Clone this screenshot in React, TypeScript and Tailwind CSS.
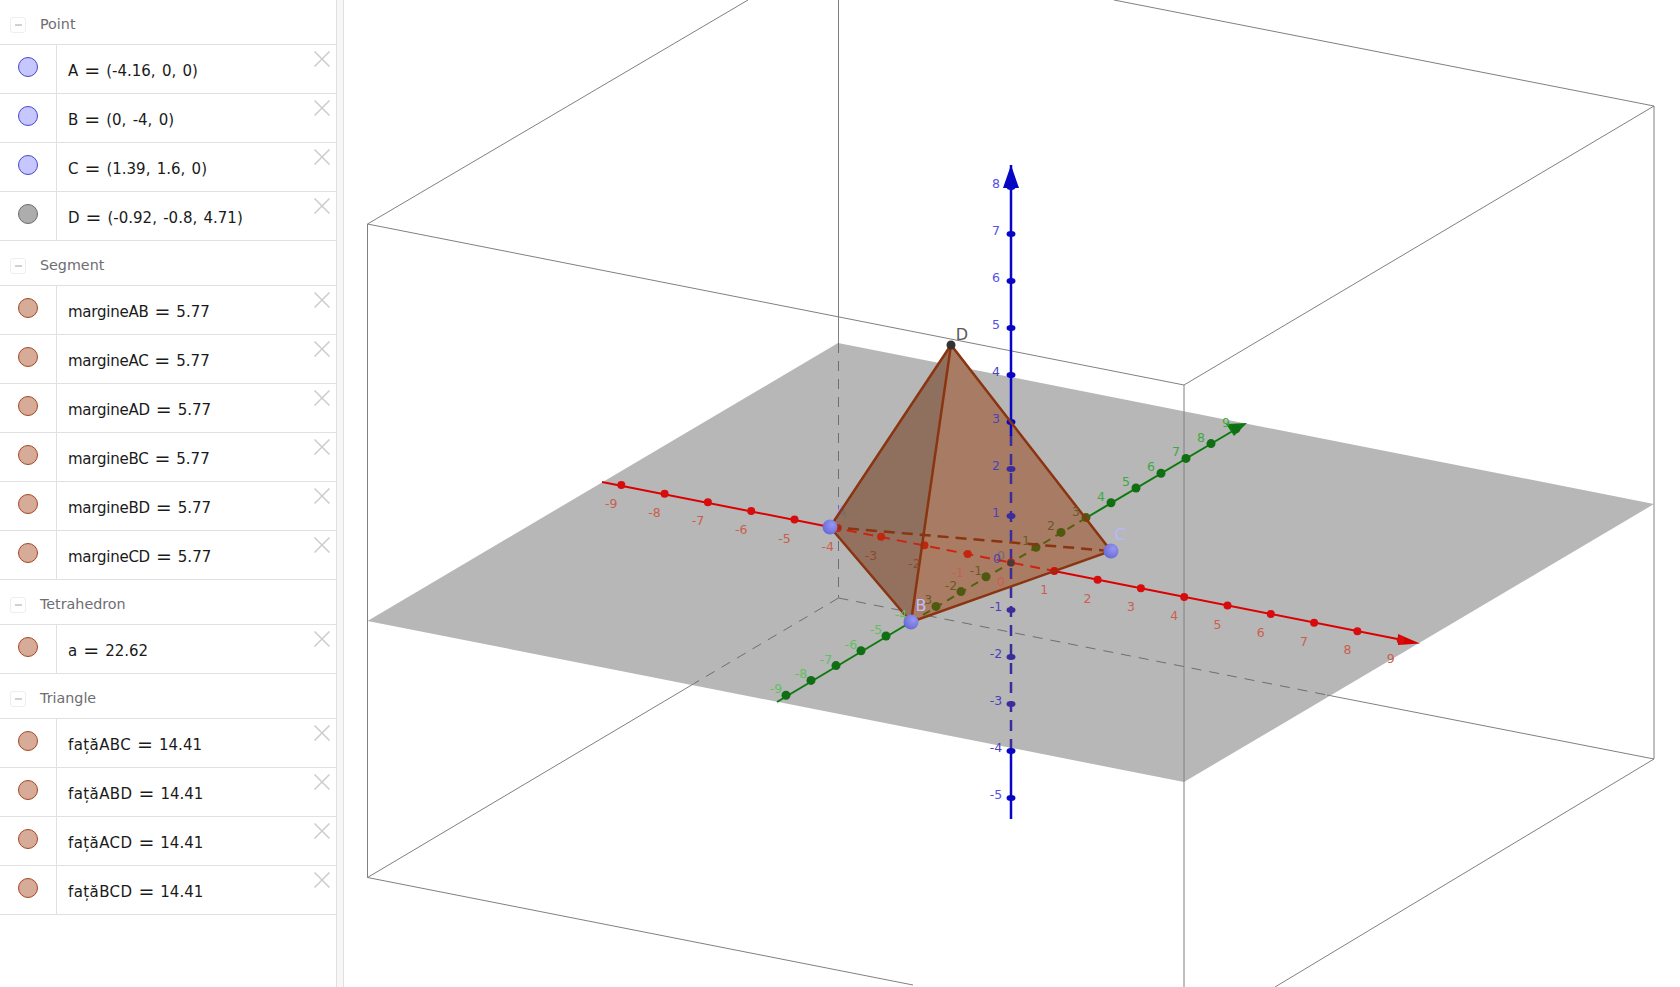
import React from 'react';

const FONT = '"DejaVu Sans", sans-serif';

type Row = { name: string; value: string; kind: 'blue' | 'gray' | 'brown'; nameClass?: string };
type Group = { title: string; rows: Row[] };

const groups: Group[] = [
  {
    title: 'Point',
    rows: [
      { name: 'A', value: '(-4.16, 0, 0)', kind: 'blue' },
      { name: 'B', value: '(0, -4, 0)', kind: 'blue' },
      { name: 'C', value: '(1.39, 1.6, 0)', kind: 'blue' },
      { name: 'D', value: '(-0.92, -0.8, 4.71)', kind: 'gray' },
    ],
  },
  {
    title: 'Segment',
    rows: ['AB', 'AC', 'AD', 'BC', 'BD', 'CD'].map((s) => ({
      name: `margine${s}`,
      value: '5.77',
      kind: 'brown' as const,
      nameClass: 'tracking-[-0.25px]',
    })),
  },
  { title: 'Tetrahedron', rows: [{ name: 'a', value: '22.62', kind: 'brown' }] },
  {
    title: 'Triangle',
    rows: ['ABC', 'ABD', 'ACD', 'BCD'].map((s) => ({
      name: `față${s}`,
      value: '14.41',
      kind: 'brown' as const,
      nameClass: 'tracking-[0.4px]',
    })),
  },
];

const marbleClass = {
  blue: 'bg-[#c7c7ff] border-[#4545d0]',
  gray: 'bg-[#adadad] border-[#6b6b6b]',
  brown: 'bg-[#d6ab98] border-[#a5461f]',
};

function AlgebraRow({ row }: { row: Row }) {
  return (
    <div className="flex h-[49px] border-b border-[#e0e0e0]">
      <div className="flex w-[57px] shrink-0 justify-center border-r border-[#e0e0e0] pt-[12px] pr-[1px]">
        <div className={`h-5 w-5 rounded-full border ${marbleClass[row.kind]}`} />
      </div>
      <div className="flex-1 pt-[12px] pl-[11px] text-[15px] leading-[28px] text-[#1a1a1a] whitespace-nowrap [word-spacing:1.5px]">
        <span className={row.nameClass}>{row.name}</span>
        <span className="mx-[6px] align-[-1px] text-[19px] leading-none">=</span>
        {row.value}
      </div>
      <svg className="mt-[6px] mr-[6px] h-4 w-4 shrink-0" viewBox="0 0 16 16">
        <path d="M0.5 0.5 L15.5 15.5 M15.5 0.5 L0.5 15.5" stroke="#cccccc" strokeWidth="1.5" fill="none" />
      </svg>
    </div>
  );
}

function AlgebraGroup({ group }: { group: Group }) {
  return (
    <div>
      <div className="flex h-[45px] items-center border-b border-[#e0e0e0] pt-[5px] pl-[10px]">
        <div className="flex h-[16px] w-[16px] items-center justify-center rounded-[3px] border border-[#eeeeee]">
          <div className="h-[2px] w-[7px] bg-[#d0d0d0]" />
        </div>
        <span className="ml-[14px] text-[14.3px] text-[#6e6d73]">{group.title}</span>
      </div>
      {group.rows.map((r) => (
        <AlgebraRow key={r.name} row={r} />
      ))}
    </div>
  );
}

// axis projections, measured off the picture
const xAt = (t: number) => [1011 + 43.3 * t, 562.5 + 8.6 * t];
const yAt = (t: number) => [1011 + 25 * t, 562 - 14.8 * t];
const zAt = (t: number) => [1011, 563 - 47 * t];

const A = [830, 527];
const B = [911, 622];
const C = [1111, 551];
const D = [951, 345];
const pts = (...p: number[][]) => p.map((q) => q.join(',')).join(' ');

const xTicks = [-9, -8, -7, -6, -5, -4, -3, -2, -1, 0, 1, 2, 3, 4, 5, 6, 7, 8, 9];
const yTicks = [-9, -8, -7, -6, -5, -4, -3, -2, -1, 1, 2, 3, 4, 5, 6, 7, 8, 9];
const zTicks = [-5, -4, -3, -2, -1, 1, 2, 3, 4, 5, 6, 7, 8];

function xLabelColor(t: number) {
  if (t === -3 || t === -2) return '#8c4a2c';
  return '#c9604e';
}
function yLabelColor(t: number) {
  if (t >= -3 && t <= 3) return '#6b5a24';
  return t < 0 ? '#62bf62' : '#3fa83f';
}
function zLabelColor(t: number) {
  if (t >= 5 || t === -5) return '#5252e8';
  return '#4a43b8';
}

function Ball({ p }: { p: number[] }) {
  return <circle cx={p[0]} cy={p[1]} r={7.5} fill="url(#ball)" />;
}

function Scene() {
  return (
    <svg className="block h-full w-full" viewBox="344 0 1336 987" style={{ fontFamily: FONT }}>
      <defs>
        <radialGradient id="ball" cx="0.65" cy="0.35" r="0.75">
          <stop offset="0" stopColor="#9696f2" />
          <stop offset="1" stopColor="#6666d4" />
        </radialGradient>
        <clipPath id="faceABD">
          <polygon points={pts(A, B, D)} />
        </clipPath>
      </defs>

      {/* box, back edges */}
      <g stroke="#808080" strokeWidth="1" fill="none">
        <path d="M367.5 224 L748 0 M367.5 224 L1184 385 M367.5 224 V877.5 L913 985 M1184 385 L1654 106 M1114 0 L1654 106 V759 L1275 987 M838.5 0 V343" />
      </g>

      {/* xOy plane */}
      <polygon points="838,343 1654,504 1184,782 367.5,621" fill="#b7b7b7" />

      <g stroke="#808080" strokeWidth="1" fill="none">
        <path d="M1184 385 V987 M695 683 L367.5 877.5 M1327 695 L1654 759" />
      </g>
      <g stroke="#6e6e6e" strokeWidth="1" fill="none" strokeDasharray="10 8">
        <path d="M838.5 343 V598 M838.5 598 L695 683 M838.5 598 L1327 695" />
      </g>

      {/* solid parts of the axes */}
      <path d="M602 482 L830 527" stroke="#dc0000" strokeWidth="2" fill="none" />
      <path d="M1054 571 L1400 639.5" stroke="#dc0000" strokeWidth="2" fill="none" />
      <polygon points="1420,643.5 1398,634 1398,645" fill="#d40000" />
      <path d="M777 702 L911 622" stroke="#0d7a0d" strokeWidth="2" fill="none" />
      <path d="M1086 518 L1236 429" stroke="#0d7a0d" strokeWidth="2" fill="none" />
      <polygon points="1247,423 1226,424 1234,436" fill="#0d7a0d" />

      {/* label A sits behind the solid */}
      <text x={841} y={517} fontSize="16" textAnchor="middle" fill="#a8a8f4">A</text>

      {/* tetrahedron */}
      <polygon points={pts(B, C, D)} fill="#a87c64" />
      <polygon points={pts(A, B, D)} fill="#8f6f5e" />
      <polygon points={pts(A, B, C)} fill="#b5805f" fillOpacity="0.12" />
      <text x={841} y={517} fontSize="16" textAnchor="middle" fill="#7d6c66" clipPath="url(#faceABD)">A</text>

      {/* axes seen through the solid */}
      <path d="M830 527 L1054 571" stroke="#cc2410" strokeWidth="2" strokeDasharray="10 7" fill="none" />
      <path d="M911 622 L1086 518" stroke="#55600f" strokeWidth="2" strokeDasharray="8 6" fill="none" />
      <path d="M1011 435 V751" stroke="#3a2c9c" strokeWidth="2.5" strokeDasharray="11 8" fill="none" />
      <path d="M1011 165 V436 M1011 751 V819" stroke="#0606c4" strokeWidth="2.5" fill="none" />
      <polygon points="1011,165 1003,188 1019,188" fill="#0606c4" />

      {xTicks.map((t) => {
        const [x, y] = xAt(t);
        const inside = t >= -4 && t <= 0;
        return <circle key={t} cx={x} cy={y} r={4} fill={inside ? '#c2260e' : '#d80c0c'} />;
      })}
      {yTicks.map((t) => {
        const [x, y] = yAt(t);
        const inside = t >= -3 && t <= 3;
        return <circle key={t} cx={x} cy={y} r={4.5} fill={inside ? '#4f5a10' : '#0f6f12'} />;
      })}
      {zTicks.map((t) => {
        const [x, y] = zAt(t);
        const dark = t >= -3 && t <= 2;
        return <ellipse key={t} cx={x} cy={y} rx={4.5} ry={3} fill={dark ? '#3a2c9c' : '#0606c4'} />;
      })}
      <circle cx={1011} cy={563} r={3.5} fill="#4a3b3a" />

      {/* edges */}
      <g stroke="#8a3410" strokeWidth="2.5" fill="none">
        <path d={`M${A} L${D} L${C} L${B} L${A} M${B} L${D}`} />
        <path d={`M${A} L${C}`} strokeDasharray="11 7" />
      </g>

      {/* axis numbers */}
      <g fontSize="12.5" textAnchor="middle">
        {xTicks.map((t) => {
          const [x, y] = xAt(t);
          return (
            <text key={t} x={x - 10} y={y + 23} fill={xLabelColor(t)}>
              {t}
            </text>
          );
        })}
        {yTicks.map((t) => {
          const [x, y] = yAt(t);
          return (
            <text key={t} x={x - 10} y={y - 2} fill={yLabelColor(t)}>
              {t}
            </text>
          );
        })}
        {zTicks.map((t) => {
          const [x, y] = zAt(t);
          return (
            <text key={t} x={x - 15} y={y + 1} fill={zLabelColor(t)}>
              {t}
            </text>
          );
        })}
        <text x={1001} y={560} fill="#7a6a6a">0</text>
        <text x={997} y={563} fill="#4a43b8">0</text>
      </g>

      {/* points */}
      <Ball p={A} />
      <Ball p={B} />
      <Ball p={C} />
      <circle cx={D[0]} cy={D[1]} r={4.5} fill="#333333" />

      <g fontSize="16" textAnchor="middle">
        <text x={921} y={611} fill="#c0c0ff">B</text>
        <text x={1120} y={540} fill="#b8b8ff">C</text>
        <text x={962} y={340} fill="#5a5a5a">D</text>
      </g>
    </svg>
  );
}

export default function App() {
  return (
    <div className="flex h-[987px] w-full overflow-hidden bg-white" style={{ fontFamily: FONT }}>
      <aside className="w-[336px] shrink-0">
        {groups.map((g) => (
          <AlgebraGroup key={g.title} group={g} />
        ))}
      </aside>
      <div className="w-[8px] shrink-0 border-x border-[#e0e0e0] bg-[#f7f7f7]" />
      <main className="min-w-0 flex-1">
        <Scene />
      </main>
    </div>
  );
}
